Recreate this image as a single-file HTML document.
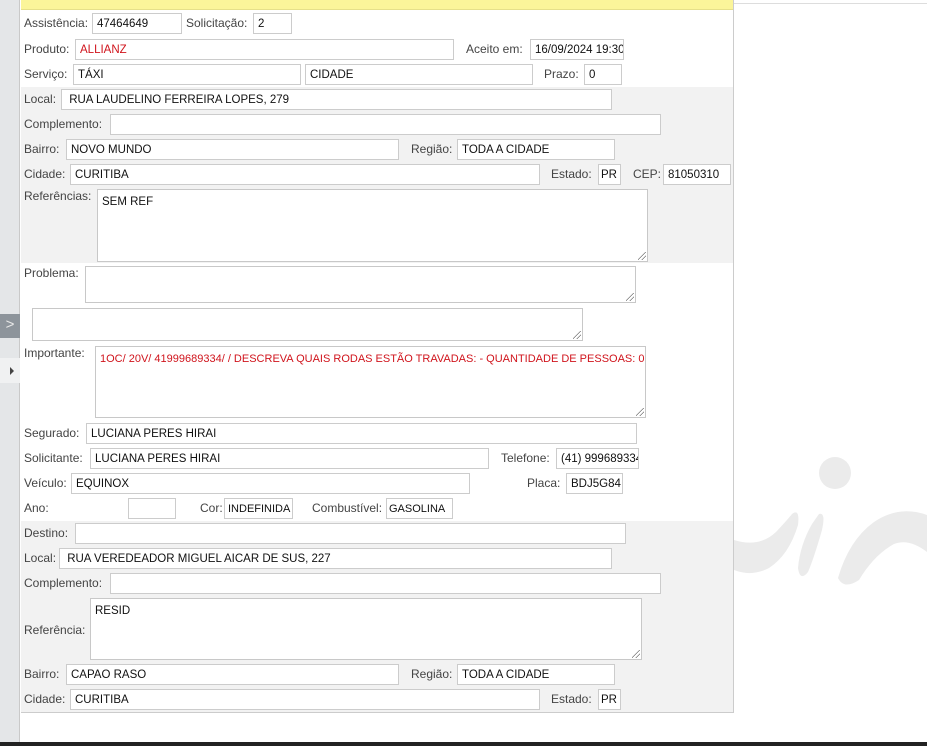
<!DOCTYPE html>
<html><head><meta charset="utf-8">
<style>
*{box-sizing:border-box;margin:0;padding:0}
body{width:927px;height:746px;overflow:hidden;background:#fff;position:relative;font-family:"Liberation Sans",sans-serif;font-size:12px;color:#333}
.a{position:absolute}
.l{position:absolute;color:#444;font-size:12px;line-height:20px;white-space:nowrap}
.i{position:absolute;height:21px;background:#fff;border:1px solid #ccc;font-size:11.5px;line-height:20px;padding-left:4px;color:#111;white-space:nowrap;overflow:hidden}
.t{position:absolute;background:#fff;border:1px solid #c8c8c8;font-size:11.5px;padding:5px 4px;color:#111;line-height:14px}
.t:after{content:"";position:absolute;right:1px;bottom:1px;width:8px;height:8px;background:linear-gradient(135deg,transparent 45%,#777 46%,#777 52%,transparent 53%,transparent 70%,#777 71%,#777 77%,transparent 78%)}
.g{position:absolute;left:21px;width:712px;background:#f2f2f2}
</style></head><body>
<div class="a" style="left:0;top:0;width:20px;height:742px;background:#e4e6e8;border-right:1px solid #c9c9c9"></div>
<div class="a" style="left:0;top:314px;width:20px;height:24px;background:#8d949b;color:#e8e8e8;font-size:15px;line-height:22px;text-align:center">&gt;</div>
<div class="a" style="left:0;top:358px;width:20px;height:25px;background:#f0f1f2"></div>
<div class="a" style="left:10px;top:367px;width:0;height:0;border-left:4px solid #444;border-top:4px solid transparent;border-bottom:4px solid transparent"></div>
<div class="a" style="left:734px;top:3px;width:193px;height:1px;background:#ddd"></div>
<svg class="a" style="left:734px;top:440px" width="193" height="160" viewBox="0 0 193 160">
<circle cx="101" cy="33" r="16" fill="#ebebeb"/>
<path d="M0 100 Q25 108 42 92 Q55 78 58 74 Q66 68 64 85 Q55 115 35 128 Q18 137 0 130Z" fill="#ebebeb"/>
<path d="M85 74 Q92 72 88 90 Q80 118 74 132 Q66 142 64 128 Q66 105 78 84Z" fill="#ebebeb"/>
<path d="M104 138 Q115 100 140 82 Q165 65 193 75 L193 112 Q175 98 160 104 Q140 115 125 140 Q110 150 104 138Z" fill="#ebebeb"/>
</svg>
<div class="a" style="left:21px;top:0;width:713px;height:713px;border-right:1px solid #ccc;border-bottom:1px solid #ccc"></div>
<div class="a" style="left:21px;top:0;width:712px;height:10px;background:#fbf59a;border-bottom:1px solid #e6e08a"></div>
<div class="g" style="top:87px;height:176px"></div>
<div class="g" style="top:521px;height:191px"></div>

<div class="l" style="left:24px;top:13px">Assistência:</div><div class="i" style="left:92px;top:13px;width:90px">47464649</div>
<div class="l" style="left:186px;top:13px">Solicitação:</div><div class="i" style="left:253px;top:13px;width:39px">2</div>

<div class="l" style="left:24px;top:39px">Produto:</div><div class="i" style="left:75px;top:39px;width:379px;color:#d0141c">ALLIANZ</div>
<div class="l" style="left:466px;top:39px">Aceito em:</div><div class="i" style="left:530px;top:39px;width:94px">16/09/2024 19:30</div>

<div class="l" style="left:24px;top:64px">Serviço:</div><div class="i" style="left:73px;top:64px;width:228px">TÁXI</div>
<div class="i" style="left:305px;top:64px;width:228px">CIDADE</div>
<div class="l" style="left:544px;top:64px">Prazo:</div><div class="i" style="left:584px;top:64px;width:38px">0</div>

<div class="l" style="left:24px;top:89px">Local:</div><div class="i" style="left:61px;top:89px;width:551px">&nbsp;RUA LAUDELINO FERREIRA LOPES, 279</div>
<div class="l" style="left:24px;top:114px">Complemento:</div><div class="i" style="left:110px;top:114px;width:551px"></div>
<div class="l" style="left:24px;top:139px">Bairro:</div><div class="i" style="left:66px;top:139px;width:333px">NOVO MUNDO</div>
<div class="l" style="left:411px;top:139px">Região:</div><div class="i" style="left:457px;top:139px;width:158px">TODA A CIDADE</div>
<div class="l" style="left:24px;top:164px">Cidade:</div><div class="i" style="left:70px;top:164px;width:470px">CURITIBA</div>
<div class="l" style="left:551px;top:164px">Estado:</div><div class="i" style="left:598px;top:164px;width:23px;padding-left:2px">PR</div>
<div class="l" style="left:633px;top:164px">CEP:</div><div class="i" style="left:663px;top:164px;width:68px">81050310</div>
<div class="l" style="left:24px;top:186px">Referências:</div><div class="t" style="left:97px;top:189px;width:551px;height:73px">SEM REF</div>

<div class="l" style="left:24px;top:263px">Problema:</div><div class="t" style="left:85px;top:266px;width:551px;height:37px"></div>
<div class="t" style="left:32px;top:308px;width:551px;height:33px"></div>
<div class="l" style="left:24px;top:343px">Importante:</div><div class="t" style="left:95px;top:346px;width:551px;height:72px;color:#d0141c;font-size:11px;white-space:nowrap;overflow:hidden">1OC/ 20V/ 41999689334/ / DESCREVA QUAIS RODAS ESTÃO TRAVADAS: - QUANTIDADE DE PESSOAS: 02</div>

<div class="l" style="left:24px;top:423px">Segurado:</div><div class="i" style="left:86px;top:423px;width:551px">LUCIANA PERES HIRAI</div>
<div class="l" style="left:24px;top:448px">Solicitante:</div><div class="i" style="left:90px;top:448px;width:399px">LUCIANA PERES HIRAI</div>
<div class="l" style="left:501px;top:448px">Telefone:</div><div class="i" style="left:556px;top:448px;width:83px">(41) 999689334</div>
<div class="l" style="left:24px;top:473px">Veículo:</div><div class="i" style="left:71px;top:473px;width:399px">EQUINOX</div>
<div class="l" style="left:527px;top:473px">Placa:</div><div class="i" style="left:566px;top:473px;width:57px">BDJ5G84</div>
<div class="l" style="left:24px;top:498px">Ano:</div><div class="i" style="left:128px;top:498px;width:48px"></div>
<div class="l" style="left:200px;top:498px">Cor:</div><div class="i" style="left:224px;top:498px;width:69px;padding-left:3px;font-size:11px">INDEFINIDA</div>
<div class="l" style="left:312px;top:498px">Combustível:</div><div class="i" style="left:386px;top:498px;width:67px;padding-left:2px;font-size:11px">GASOLINA</div>

<div class="l" style="left:24px;top:523px">Destino:</div><div class="i" style="left:75px;top:523px;width:551px"></div>
<div class="l" style="left:24px;top:548px">Local:</div><div class="i" style="left:59px;top:548px;width:553px">&nbsp;RUA VEREDEADOR MIGUEL AICAR DE SUS, 227</div>
<div class="l" style="left:24px;top:573px">Complemento:</div><div class="i" style="left:110px;top:573px;width:551px"></div>
<div class="l" style="left:24px;top:620px">Referência:</div><div class="t" style="left:90px;top:598px;width:552px;height:62px">RESID</div>
<div class="l" style="left:24px;top:664px">Bairro:</div><div class="i" style="left:66px;top:664px;width:333px">CAPAO RASO</div>
<div class="l" style="left:411px;top:664px">Região:</div><div class="i" style="left:457px;top:664px;width:158px">TODA A CIDADE</div>
<div class="l" style="left:24px;top:689px">Cidade:</div><div class="i" style="left:70px;top:689px;width:470px">CURITIBA</div>
<div class="l" style="left:551px;top:689px">Estado:</div><div class="i" style="left:598px;top:689px;width:23px;padding-left:2px">PR</div>

<div class="a" style="left:0;top:742px;width:927px;height:4px;background:#222"></div>
</body></html>
